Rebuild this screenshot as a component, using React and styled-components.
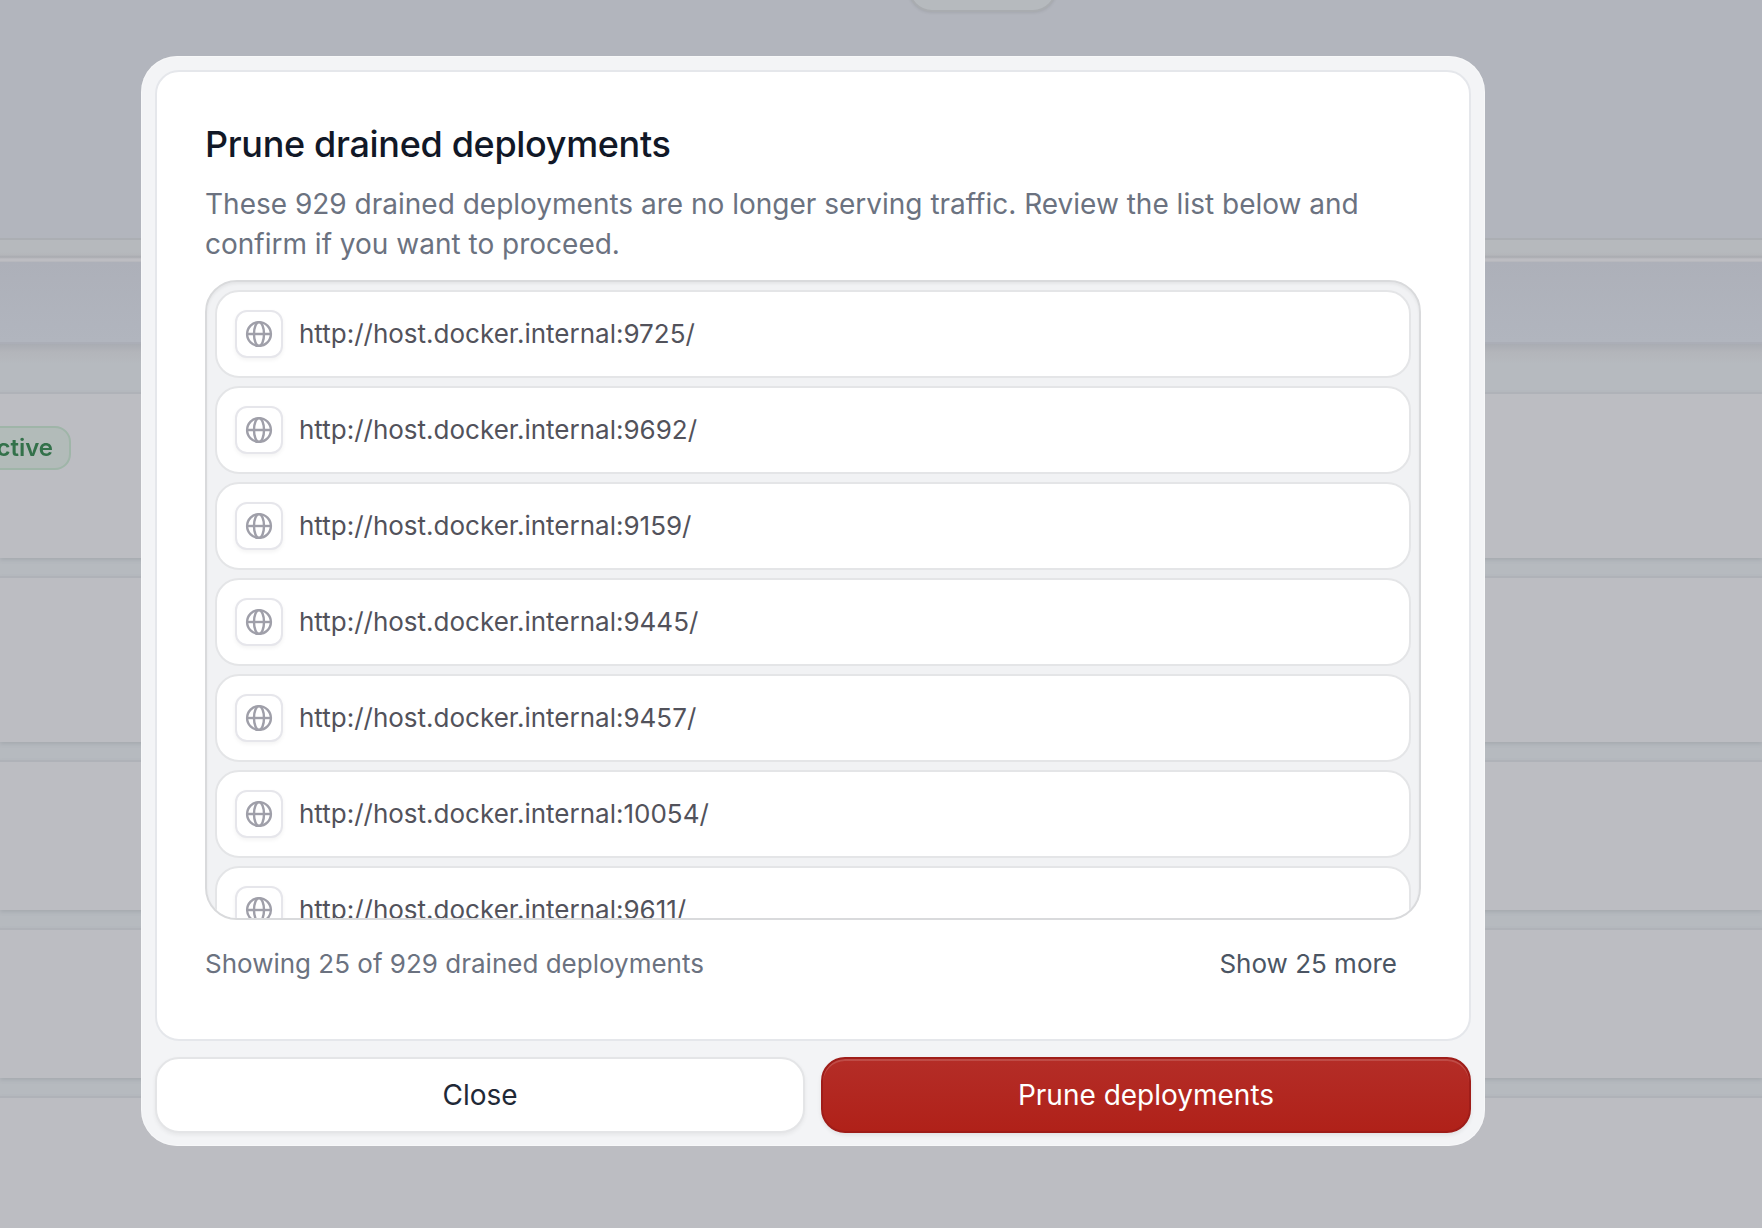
import styled, { createGlobalStyle } from "styled-components";

const deployments = [
  "http://host.docker.internal:9725/",
  "http://host.docker.internal:9692/",
  "http://host.docker.internal:9159/",
  "http://host.docker.internal:9445/",
  "http://host.docker.internal:9457/",
  "http://host.docker.internal:10054/",
  "http://host.docker.internal:9611/",
];

const Globe = () => (
  <svg width="28" height="28" viewBox="0 0 28 28" fill="none" stroke="#9f9fa9" strokeWidth="2.4">
    <circle cx="14" cy="14" r="11.9" />
    <ellipse cx="14" cy="14" rx="5" ry="11.9" />
    <path d="M2 14h24" />
  </svg>
);

const App = () => {
  return (
    <>
      <GlobalStyle />
      <Screen>
        <Page>
          <Top>
            <TopPill />
          </Top>
          <Strip />
          <TableHead />
          <HeadShadow />
          <PageRow height={166}>
            <Badge>Active</Badge>
          </PageRow>
          <PageRow height={166} />
          <PageRow height={150} />
          <PageRow height={150} />
          <PageRow height={150} />
        </Page>
        <Modal>
          <Body>
            <Title>Prune drained deployments</Title>
            <Description>
              These 929 drained deployments are no longer serving traffic.
              Review the list below and confirm if you want to proceed.
            </Description>
            <List>
              {deployments.map((url) => (
                <Item key={url}>
                  <IconTile>
                    <Globe />
                  </IconTile>
                  <Url>{url}</Url>
                </Item>
              ))}
            </List>
            <ListFooter>
              <Count>Showing 25 of 929 drained deployments</Count>
              <ShowMore>Show 25 more</ShowMore>
            </ListFooter>
          </Body>
          <Actions>
            <CloseButton>Close</CloseButton>
            <PruneButton>Prune deployments</PruneButton>
          </Actions>
        </Modal>
      </Screen>
    </>
  );
};

const GlobalStyle = createGlobalStyle`
  * {
    box-sizing: border-box;
  }

  body {
    margin: 0;
    overflow: hidden;
    font-family: "Inter", sans-serif;
    -webkit-font-smoothing: antialiased;
  }
`;

const Screen = styled.div`
  position: relative;
  width: 1762px;
  height: 1228px;
  overflow: hidden;
  background-color: #b6babf;
`;

const Page = styled.div`
  display: flex;
  flex-direction: column;
  filter: blur(0.7px);
`;

const Top = styled.div`
  display: flex;
  flex: none;
  height: 240px;
  padding-left: 908px;
  background-color: #b2b5bd;
  border-bottom: 2px solid #abaeb3;
`;

const TopPill = styled.div`
  width: 149px;
  height: 50px;
  margin-top: -38px;
  border: 2px solid #a9acb0;
  border-radius: 24px;
  background-color: #b6babe;
  box-shadow: 0 1px 3px rgba(0, 0, 0, 0.08);
`;

const Strip = styled.div`
  flex: none;
  height: 22px;
  background: linear-gradient(
    #b6b9bd 0 12px,
    #b4b6ba 15px,
    #a9abb0 17px,
    #bdbdc2 19px 21px,
    #b1b3b9 22px
  );
`;

const TableHead = styled.div`
  flex: none;
  height: 82px;
  background: linear-gradient(#adb0b9, #b1b5be);
  border-bottom: 2px solid #abaeb7;
`;

const HeadShadow = styled.div`
  flex: none;
  height: 48px;
  background: linear-gradient(#a9acb3, #b3b5ba 8px, #b6babf 20px);
`;

const PageRow = styled.div`
  flex: none;
  height: ${(props) => props.height}px;
  margin-bottom: 18px;
  padding-top: 32px;
  border-top: 2px solid #afb2b8;
  background-color: #bcbdc2;
  box-shadow: 0 2px 4px rgba(100, 105, 115, 0.2);
`;

const Badge = styled.div`
  display: flex;
  align-items: center;
  justify-content: flex-end;
  width: 111px;
  height: 44px;
  margin-left: -40px;
  padding: 0 16px 2px 0;
  border: 2px solid #9fb5a8;
  border-radius: 16px;
  background-color: #b2bbb9;
  color: #33714a;
  font-size: 24px;
  font-weight: 600;
`;

const Modal = styled.div`
  position: absolute;
  top: 56px;
  left: 141px;
  width: 1344px;
  height: 1090px;
  padding: 14px;
  border-radius: 36px;
  background-color: #f3f4f6;
  box-shadow: inset 0 0 0 1px rgba(255, 255, 255, 0.35);
`;

const Body = styled.div`
  height: 971px;
  padding: 48px 48px 0;
  border: 2px solid #e5e7eb;
  border-radius: 24px;
  background-color: #ffffff;
`;

const Title = styled.h2`
  margin: 0 0 16px;
  color: #111827;
  font-size: 36px;
  font-weight: 500;
  line-height: 48px;
  letter-spacing: -0.33px;
`;

const Description = styled.p`
  margin: 0 0 16px;
  color: #6b7280;
  font-size: 28px;
  line-height: 40px;
`;

const List = styled.div`
  display: flex;
  flex-direction: column;
  gap: 8px;
  height: 640px;
  padding: 8px;
  overflow: hidden;
  border: 2px solid #d9dadc;
  border-radius: 32px;
  background-color: #f1f2f4;
  box-shadow: inset 0 2px 3px rgba(0, 0, 0, 0.05);
`;

const Item = styled.div`
  display: flex;
  flex: none;
  align-items: center;
  gap: 16px;
  height: 88px;
  padding: 0 18px;
  border: 2px solid #e4e5e7;
  border-radius: 24px;
  background-color: #ffffff;
`;

const IconTile = styled.div`
  display: flex;
  align-items: center;
  justify-content: center;
  width: 48px;
  height: 48px;
  border: 2px solid #e6e6eb;
  border-radius: 12px;
  background-color: #ffffff;
  box-shadow: 0 2px 4px rgba(0, 0, 0, 0.05);
`;

const Url = styled.span`
  color: #52525b;
  font-size: 26px;
  line-height: 40px;
`;

const ListFooter = styled.div`
  display: flex;
  align-items: center;
  justify-content: space-between;
  height: 86px;
  padding-right: 24px;
  font-size: 26px;
`;

const Count = styled.span`
  color: #6b7280;
`;

const ShowMore = styled.span`
  color: #4b5563;
`;

const Actions = styled.div`
  display: grid;
  grid-template-columns: 1fr 1fr;
  gap: 16px;
  margin-top: 16px;
`;

const Button = styled.button`
  height: 76px;
  padding: 0;
  border-radius: 24px;
  font-family: inherit;
  font-size: 28px;
  cursor: pointer;
`;

const CloseButton = styled(Button)`
  border: 2px solid #e4e5e7;
  background-color: #ffffff;
  color: #1f2937;
  box-shadow: 0 2px 4px rgba(0, 0, 0, 0.06);
`;

const PruneButton = styled(Button)`
  border: 2px solid #9f1d19;
  background: linear-gradient(#b42d27, #b02119);
  color: #ffffff;
  box-shadow: inset 0 2px 0 rgba(255, 255, 255, 0.15),
    0 2px 4px rgba(0, 0, 0, 0.08);
`;

export default App;
